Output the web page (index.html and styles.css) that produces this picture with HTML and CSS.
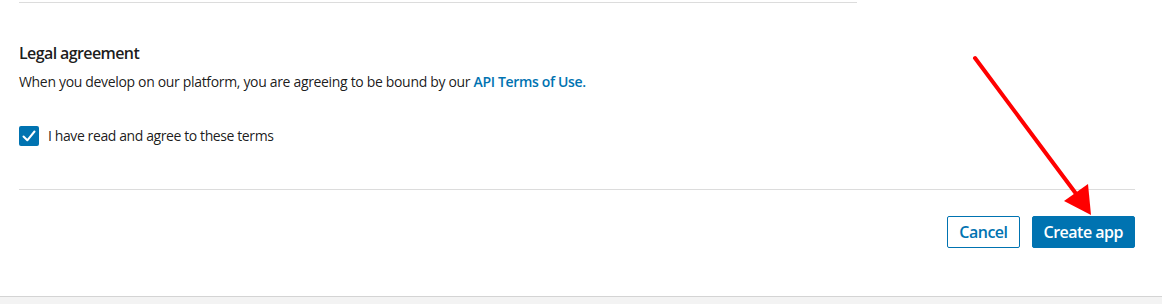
FILE: index.html
```html
<!DOCTYPE html>
<html lang="en">
<head>
    <meta charset="UTF-8">
    <meta name="viewport" content="width=device-width, initial-scale=1.0">
    <title>Create an app</title>
    <link rel="stylesheet" href="styles.css">
</head>
<body>
    <div class="page">
        <hr class="rule rule-short">

        <section class="legal">
            <h2>Legal agreement</h2>
            <p>When you develop on our platform, you are agreeing to be bound by our <a href="#">API Terms of Use.</a></p>

            <label class="agree">
                <span class="checkbox">
                    <svg viewBox="0 0 20 20" width="20" height="20">
                        <path d="M4.5 10.5 L8.3 14.3 L15.5 5.5" fill="none" stroke="#fff" stroke-width="2" stroke-linecap="round" stroke-linejoin="round"/>
                    </svg>
                </span>
                I have read and agree to these terms
            </label>
        </section>

        <hr class="rule">

        <div class="actions">
            <button class="btn btn-secondary">Cancel</button>
            <button class="btn btn-primary">Create app</button>
        </div>
    </div>

    <footer class="page-foot"></footer>

    <!-- annotation drawn over the screenshot -->
    <svg class="annotation" width="1162" height="304" viewBox="0 0 1162 304">
        <line x1="975" y1="58" x2="1077" y2="195" stroke="#ff0000" stroke-width="4" stroke-linecap="round"/>
        <polygon points="1064,201 1088,184 1091,215" fill="#ff0000"/>
    </svg>
</body>
</html>
```

FILE: styles.css
```css
:root {
    --blue: #0073b1;
    --text: rgba(0, 0, 0, 0.9);
    --line: #dcdcdc;
}

* {
    margin: 0;
    padding: 0;
    box-sizing: border-box;
    font-family: 'Open Sans', 'Liberation Sans', sans-serif;
}

body {
    background: #fff;
    color: var(--text);
    overflow: hidden;
}

.page {
    padding: 2px 27px 48px 19px;
}

.rule {
    border: none;
    height: 1px;
    background: var(--line);
}

.rule-short {
    width: 838px;
}

.legal {
    padding-top: 38px;
}

.legal h2 {
    font-size: 16px;
    line-height: 24px;
    font-weight: 600;
    letter-spacing: -0.6px;
}

.legal p {
    margin-top: 7px;
    font-size: 14px;
    line-height: 20px;
    letter-spacing: -0.33px;
}

.legal a {
    color: var(--blue);
    font-weight: 600;
    text-decoration: none;
}

.agree {
    display: flex;
    align-items: center;
    gap: 9px;
    margin-top: 34px;
    margin-bottom: 43px;
    font-size: 14px;
    line-height: 20px;
    letter-spacing: -0.4px;
}

.checkbox {
    display: flex;
    width: 20px;
    height: 20px;
    background: var(--blue);
    border-radius: 2px;
}

.actions {
    display: flex;
    justify-content: flex-end;
    gap: 12px;
    margin-top: 26px;
}

.btn {
    height: 32px;
    padding: 0 11px;
    border-radius: 2px;
    font-size: 16px;
    font-weight: 600;
    letter-spacing: -0.5px;
    cursor: pointer;
}

.btn-secondary {
    background: #fff;
    color: var(--blue);
    border: 1px solid var(--blue);
}

.btn-primary {
    background: var(--blue);
    color: #fff;
    border: 1px solid var(--blue);
}

.page-foot {
    height: 8px;
    background: #f3f3f3;
    border-top: 1px solid #d4d4d4;
}

.annotation {
    position: absolute;
    top: 0;
    left: 0;
    pointer-events: none;
}
```
